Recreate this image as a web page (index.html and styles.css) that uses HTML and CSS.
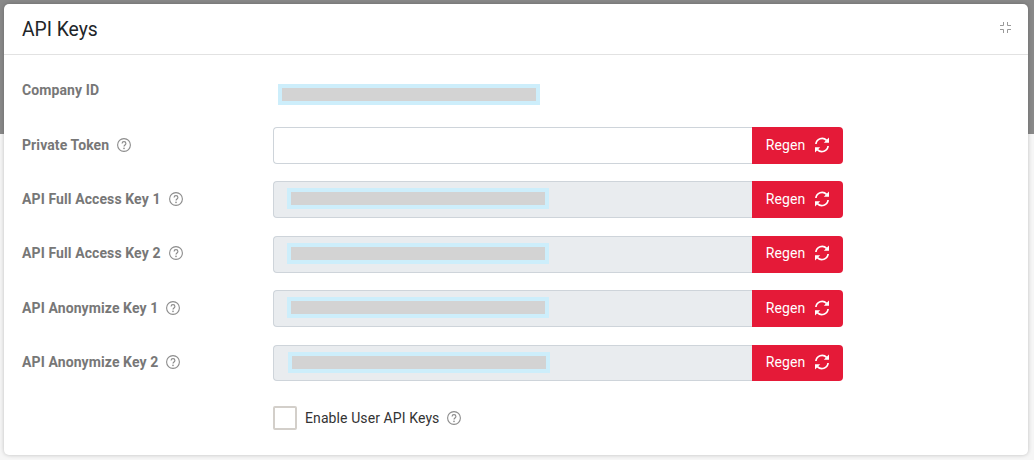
FILE: index.html
```html
<!DOCTYPE html>
<html lang="en">
<head>
<meta charset="utf-8">
<title>API Keys</title>
<link rel="stylesheet" href="styles.css">
</head>
<body>
<svg class="defs" width="0" height="0" aria-hidden="true">
  <symbol id="help" viewBox="0 0 14 14">
    <circle cx="7" cy="7" r="6.4" fill="none" stroke="currentColor" stroke-width="1.1"/>
    <path d="M5.100 5.500C5.100 4.300 6 3.600 7 3.600s1.900.7 1.900 1.800c0 1.500-1.900 1.600-1.900 3.200" fill="none" stroke="currentColor" stroke-width="1.150"/>
    <circle cx="7" cy="10.400" r=".8" fill="currentColor"/>
  </symbol>
  <symbol id="sync" viewBox="0 0 16 16">
    <path d="M1.900 7A6.200 6.200 0 0 1 12.600 3.400" fill="none" stroke="currentColor" stroke-width="1.700"/>
    <path d="M15 .6v5.200H9.800z" fill="currentColor"/>
    <path d="M14.100 9A6.200 6.200 0 0 1 3.400 12.600" fill="none" stroke="currentColor" stroke-width="1.700"/>
    <path d="M1 15.400v-5.200h5.200z" fill="currentColor"/>
  </symbol>
</svg>
<main class="modal">
  <header class="modal-header">
    <h1 class="modal-title">API Keys</h1>
    <button class="collapse" aria-label="Collapse">
      <svg width="11" height="11" viewBox="0 0 11 11"><path d="M3.500 0v3.500H0M7.500 0v3.500H11M3.500 11V7.500H0M7.500 11V7.500H11" fill="none" stroke="currentColor"/></svg>
    </button>
  </header>
  <section class="modal-body">
    <div class="row row-static">
      <div class="label">Company ID</div>
      <div class="static-value"><span class="redact"><span></span></span></div>
    </div>
    <div class="row">
      <div class="label">Private Token <svg class="help"><use href="#help"/></svg></div>
      <div class="group">
        <div class="field"></div>
        <button class="regen">Regen <svg class="sync"><use href="#sync"/></svg></button>
      </div>
    </div>
    <div class="row">
      <div class="label">API Full Access Key 1 <svg class="help"><use href="#help"/></svg></div>
      <div class="group">
        <div class="field field-off"><span class="redact"><span></span></span></div>
        <button class="regen">Regen <svg class="sync"><use href="#sync"/></svg></button>
      </div>
    </div>
    <div class="row">
      <div class="label">API Full Access Key 2 <svg class="help"><use href="#help"/></svg></div>
      <div class="group">
        <div class="field field-off"><span class="redact"><span></span></span></div>
        <button class="regen">Regen <svg class="sync"><use href="#sync"/></svg></button>
      </div>
    </div>
    <div class="row">
      <div class="label">API Anonymize Key 1 <svg class="help"><use href="#help"/></svg></div>
      <div class="group">
        <div class="field field-off"><span class="redact"><span></span></span></div>
        <button class="regen">Regen <svg class="sync"><use href="#sync"/></svg></button>
      </div>
    </div>
    <div class="row">
      <div class="label">API Anonymize Key 2 <svg class="help"><use href="#help"/></svg></div>
      <div class="group">
        <div class="field field-off field-nudged"><span class="redact"><span></span></span></div>
        <button class="regen">Regen <svg class="sync"><use href="#sync"/></svg></button>
      </div>
    </div>
    <div class="row row-check">
      <div></div>
      <label class="check"><span class="box"></span>Enable User API Keys <svg class="help"><use href="#help"/></svg></label>
    </div>
  </section>
</main>
</body>
</html>
```

FILE: styles.css
```css
* { box-sizing: border-box; }
html, body { margin: 0; height: 100%; }
body {
  width: 1034px;
  height: 460px;
  overflow: hidden;
  padding: 4px 6px 0 4px;
  font-family: Roboto, "Liberation Sans", sans-serif;
  background: linear-gradient(#898989 0 134px, #f6f6f6 134px);
}
.defs { position: absolute; }
.modal {
  height: 451px;
  background: #fff;
  border-radius: 5px;
  box-shadow: 0 0 4px rgba(0,0,0,.22);
}
.modal-header {
  height: 51px;
  display: flex;
  align-items: center;
  justify-content: space-between;
  padding: 0 17px 0 18px;
  border-bottom: 1px solid #e2e2e2;
}
.modal-title { margin: 0; font-size: 19.3px; font-weight: 400; color: #212529; }
.collapse { padding: 0; border: 0; background: none; color: #999; display: flex; margin-bottom: 3px; }
.modal-body { padding: 17.6px 0 0 18px; display: flex; flex-direction: column; gap: 17.6px; }
.row {
  display: grid;
  grid-template-columns: 251px 570px;
  align-items: center;
  height: 36.8px;
}
.label { font-size: 14px; font-weight: 700; letter-spacing: .1px; color: #777; display: flex; align-items: center; gap: 8px; padding-bottom: 1.4px; }
.row-static { align-items: start; }
.row-static .label { padding-top: 9px; }
.static-value { padding: 11px 0 0 5px; }
.redact { display: inline-block; width: 262px; height: 21px; padding: 4px; background: #cdeefb; }
.redact span { display: block; height: 13px; background: #d3d3d3; }
.group { display: flex; height: 100%; }
.field {
  flex: 1;
  border: 1px solid #ced4da;
  border-right: 0;
  border-radius: 4px 0 0 4px;
  padding: 6px 0 0 13px;
  background: #fff;
}
.field-off { background: #e9ecef; }
.field-nudged { padding-left: 14px; }
.regen {
  width: 91px;
  border: 0;
  border-radius: 0 4px 4px 0;
  background: #e51a38;
  color: #fff;
  font: 400 14px Roboto, "Liberation Sans", sans-serif;
  letter-spacing: .1px;
  display: flex;
  align-items: center;
  justify-content: center;
  gap: 9px;
  padding: 0 0 1.4px 1px;
}
.sync { width: 16px; height: 16px; }
.help { width: 14px; height: 14px; color: #8c8c8c; }
.check { display: flex; align-items: center; font-size: 14px; letter-spacing: .1px; color: #333; gap: 8px; margin-top: 1px; }
.box { width: 24px; height: 24px; border: 2px solid #d3cfca; border-radius: 2px; }
```
